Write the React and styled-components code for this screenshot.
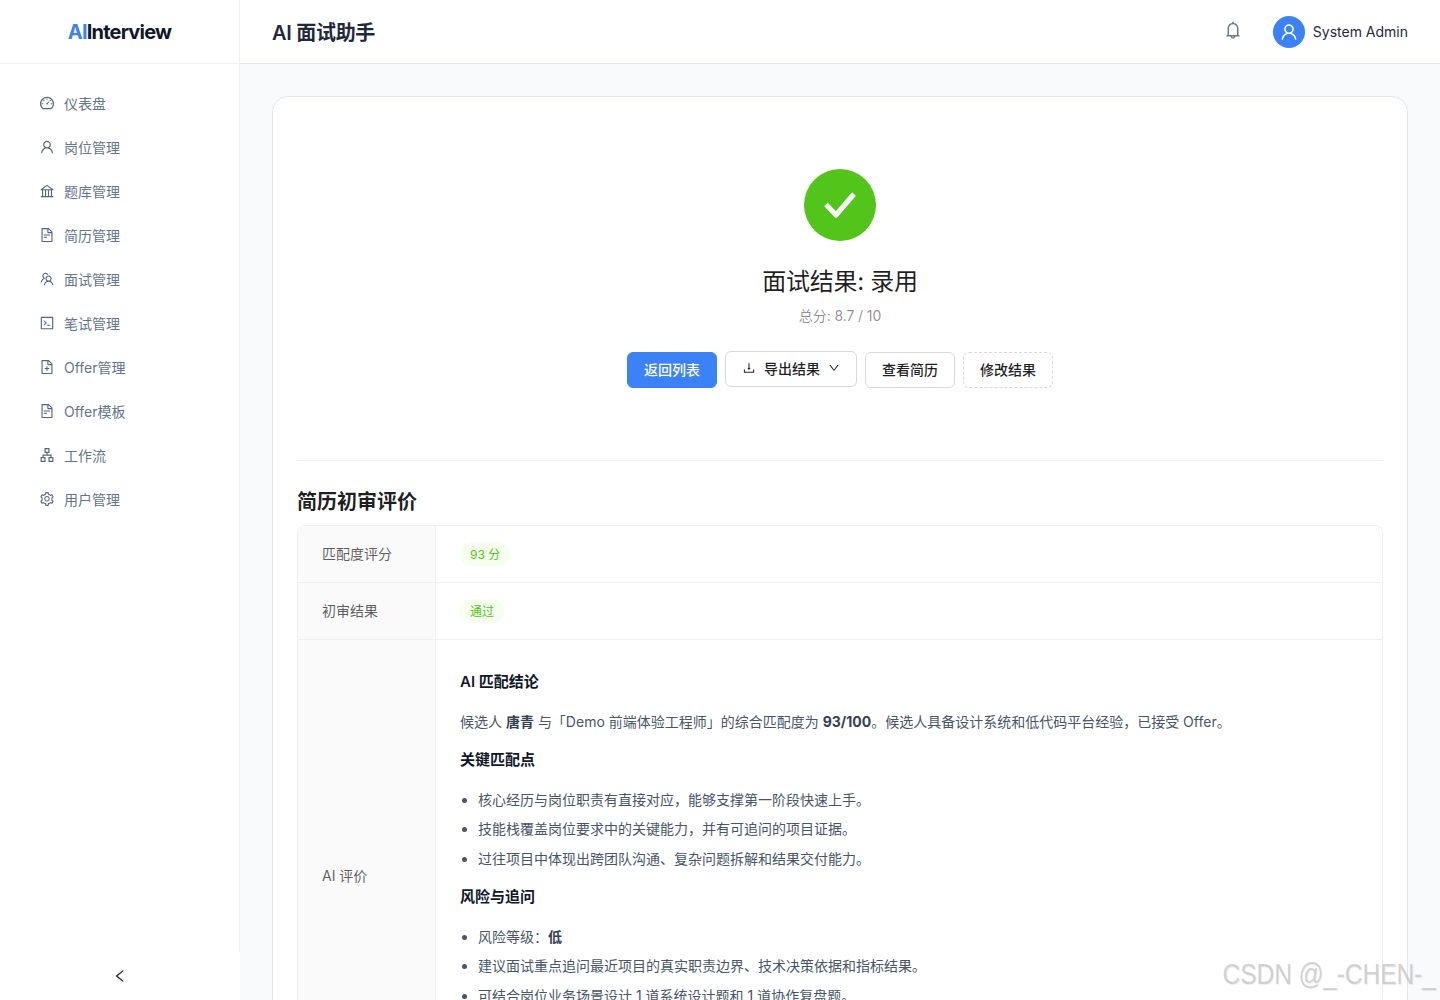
import React from 'react';
import styled, { createGlobalStyle } from 'styled-components';
import {
    AiOutlineDashboard, AiOutlineUser, AiOutlineBank, AiOutlineFileText, AiOutlineTeam,
    AiOutlineCode, AiOutlineFileAdd, AiOutlineApartment, AiOutlineSetting, AiOutlineBell,
    AiOutlineDownload, AiOutlineDown, AiOutlineLeft,
} from 'react-icons/ai';

const FONT = `Inter, "Noto Sans CJK SC", sans-serif`;

const GlobalStyle = createGlobalStyle`
    html, body { margin: 0; padding: 0; height: 100%; overflow: hidden; }
    body { font-family: ${FONT}; font-size: 14px; color: #0f172a; background: #f8fafc; }
    * { box-sizing: border-box; }
`;

const Layout = styled.div`
    display: flex;
    height: 1000px;
    overflow: hidden;
    position: relative;
`;

const Sider = styled.aside`
    width: 240px;
    flex: none;
    display: flex;
    flex-direction: column;
    background: #fff;
`;

const SiderBody = styled.div`
    flex: 1;
    border-right: 1px solid #f0f0f0;
`;

const Logo = styled.div`
    height: 64px;
    display: flex;
    align-items: center;
    justify-content: center;
    border-bottom: 1px solid #f0f0f0;
    font-size: 20px;
    font-weight: 700;
    letter-spacing: -0.8px;
    color: #0f172a;
    span { color: #3b82f6; }
`;

const Menu = styled.nav`
    padding: 15px 4px 0;
`;

const MenuItem = styled.div`
    height: 40px;
    margin: 4px;
    padding-left: 31px;
    display: flex;
    align-items: center;
    gap: 9px;
    color: #64748b;
    font-size: 14px;
    svg { font-size: 16px; color: #55657d; flex: none; }
`;

const Trigger = styled.div`
    height: 48px;
    display: flex;
    align-items: center;
    justify-content: center;
    color: #1f2937;
    font-size: 16px;
`;

const Main = styled.div`
    flex: 1;
    min-width: 0;
    display: flex;
    flex-direction: column;
`;

const Header = styled.header`
    height: 64px;
    flex: none;
    background: #fff;
    border-bottom: 1px solid #e2e8f0;
    padding: 0 32px;
    display: flex;
    align-items: center;
    justify-content: space-between;
`;

const PageTitle = styled.div`
    font-size: 20px;
    font-weight: 600;
    letter-spacing: -0.3px;
    color: #1e293b;
`;

const HeaderRight = styled.div`
    display: flex;
    align-items: center;
    gap: 30px;
`;

const Bell = styled.div`
    display: flex;
    font-size: 20px;
    color: #64748b;
    margin-top: -4px;
`;

const UserBox = styled.div`
    display: flex;
    align-items: center;
    gap: 8px;
    color: #1e293b;
`;

const Avatar = styled.div`
    width: 32px;
    height: 32px;
    border-radius: 50%;
    background: #3b82f6;
    color: #fff;
    display: flex;
    align-items: center;
    justify-content: center;
    font-size: 20px;
`;

const Content = styled.main`
    flex: 1;
    min-height: 0;
    overflow: hidden;
    padding: 32px;
`;

const Card = styled.section`
    background: #fff;
    border: 1px solid #e2e8f0;
    border-radius: 16px;
    padding: 24px;
`;

const Result = styled.div`
    padding: 48px 32px;
    text-align: center;
`;

const SuccessIcon = styled.div`
    width: 72px;
    height: 72px;
    margin: 0 auto 25px;
    border-radius: 50%;
    background: #52c41a;
    display: flex;
    align-items: center;
    justify-content: center;
`;

const ResultTitle = styled.div`
    font-size: 24px;
    line-height: 32px;
    letter-spacing: -0.3px;
    color: rgba(0, 0, 0, 0.88);
`;

const ResultSub = styled.div`
    margin-top: 7px;
    font-size: 14px;
    line-height: 22px;
    letter-spacing: -0.1px;
    color: rgba(0, 0, 0, 0.45);
`;

const Actions = styled.div`
    margin-top: 24px;
    display: flex;
    justify-content: center;
    align-items: center;
    gap: 8px;
`;

const Button = styled.div`
    height: 36px;
    padding: 0 16px 2px;
    margin-bottom: ${p => (p.$raised ? 2 : 0)}px;
    display: inline-flex;
    align-items: center;
    gap: 8px;
    border-radius: 6px;
    font-size: 14px;
    font-weight: 500;
    background: ${p => (p.$primary ? '#3b82f6' : '#fff')};
    color: ${p => (p.$primary ? '#fff' : 'rgba(0, 0, 0, 0.88)')};
    border: 1px ${p => (p.$dashed ? 'dashed' : 'solid')} ${p => (p.$primary ? '#3b82f6' : '#d9d9d9')};
`;

const ButtonIcon = styled.span`
    display: flex;
    font-size: ${p => p.$size}px;
`;

const Divider = styled.hr`
    margin: 23px 0 25px;
    border: 0;
    border-top: 1px solid #f0f0f0;
`;

const SectionTitle = styled.h3`
    margin: 0 0 7px;
    font-size: 20px;
    line-height: 32px;
    font-weight: 600;
    color: rgba(0, 0, 0, 0.88);
`;

const Table = styled.div`
    border: 1px solid #f0f0f0;
    border-radius: 8px 8px 0 0;
    overflow: hidden;
`;

const Row = styled.div`
    display: grid;
    grid-template-columns: 138px 1fr;
    min-height: ${p => p.$min}px;
    & + & { border-top: 1px solid #f0f0f0; }
`;

const Label = styled.div`
    background: #fafafa;
    border-right: 1px solid #f0f0f0;
    padding: 0 24px 2px;
    display: flex;
    align-items: center;
    color: rgba(0, 0, 0, 0.65);
`;

const Value = styled.div`
    padding: ${p => (p.$rich ? '31px 24px' : '0 24px')};
    display: ${p => (p.$rich ? 'block' : 'flex')};
    align-items: center;
    color: #475569;
`;

const Tag = styled.span`
    height: 24px;
    padding: 0 10px 2px;
    border-radius: 12px;
    background: #f6ffed;
    color: #52c41a;
    font-size: 12px;
    display: inline-flex;
    align-items: center;
`;

const RichHeading = styled.div`
    font-size: 15px;
    line-height: 22px;
    font-weight: 600;
    color: #0f172a;
    margin-bottom: 18px;
`;

const Para = styled.p`
    margin: 0 0 16px;
    line-height: 22px;
    color: #475569;
    strong { font-weight: 700; color: #334155; }
`;

const List = styled.ul`
    margin: 0 0 16px;
    padding-left: 18px;
    color: #475569;
    strong { font-weight: 600; color: #334155; }
`;

const ListItem = styled.li`
    line-height: 22px;
    margin-bottom: 7.4px;
`;

const Watermark = styled.div`
    position: absolute;
    right: 4px;
    bottom: 10px;
    font-family: "Liberation Sans", sans-serif;
    font-size: 29px;
    line-height: 32px;
    letter-spacing: -0.2px;
    color: rgba(195, 195, 195, 0.7);
    text-shadow: 1px 1px 1px rgba(0, 0, 0, 0.08);
    transform: scaleX(0.85);
    transform-origin: right center;
    pointer-events: none;
`;

const MENU = [
    [AiOutlineDashboard, '仪表盘'],
    [AiOutlineUser, '岗位管理'],
    [AiOutlineBank, '题库管理'],
    [AiOutlineFileText, '简历管理'],
    [AiOutlineTeam, '面试管理'],
    [AiOutlineCode, '笔试管理'],
    [AiOutlineFileAdd, 'Offer管理'],
    [AiOutlineFileText, 'Offer模板'],
    [AiOutlineApartment, '工作流'],
    [AiOutlineSetting, '用户管理'],
];

const App = () => (
    <Layout>
        <GlobalStyle />
        <Sider>
            <SiderBody>
                <Logo><span>AI</span>Interview</Logo>
                <Menu>
                    {MENU.map(([Icon, label]) => (
                        <MenuItem key={label}><Icon />{label}</MenuItem>
                    ))}
                </Menu>
            </SiderBody>
            <Trigger><AiOutlineLeft /></Trigger>
        </Sider>
        <Main>
            <Header>
                <PageTitle>AI 面试助手</PageTitle>
                <HeaderRight>
                    <Bell><AiOutlineBell /></Bell>
                    <UserBox>
                        <Avatar><AiOutlineUser /></Avatar>
                        System Admin
                    </UserBox>
                </HeaderRight>
            </Header>
            <Content>
                <Card>
                    <Result>
                        <SuccessIcon>
                            <svg width="34" height="28" viewBox="0 0 34 28" fill="none">
                                <path d="M3 13.5 L13 24 L31 3" stroke="#fff" strokeWidth="5" strokeLinejoin="round" />
                            </svg>
                        </SuccessIcon>
                        <ResultTitle>面试结果: 录用</ResultTitle>
                        <ResultSub>总分: 8.7 / 10</ResultSub>
                        <Actions>
                            <Button $primary>返回列表</Button>
                            <Button $raised>
                                <ButtonIcon $size={14}><AiOutlineDownload /></ButtonIcon>
                                导出结果
                                <ButtonIcon $size={12}><AiOutlineDown /></ButtonIcon>
                            </Button>
                            <Button>查看简历</Button>
                            <Button $dashed>修改结果</Button>
                        </Actions>
                    </Result>
                    <Divider />
                    <SectionTitle>简历初审评价</SectionTitle>
                    <Table>
                        <Row $min={56}>
                            <Label>匹配度评分</Label>
                            <Value><Tag>93 分</Tag></Value>
                        </Row>
                        <Row $min={57}>
                            <Label>初审结果</Label>
                            <Value><Tag>通过</Tag></Value>
                        </Row>
                        <Row $min={472}>
                            <Label>AI 评价</Label>
                            <Value $rich>
                                <RichHeading>AI 匹配结论</RichHeading>
                                <Para>候选人 <strong>唐青</strong> 与「Demo 前端体验工程师」的综合匹配度为 <strong>93/100</strong>。候选人具备设计系统和低代码平台经验，已接受 Offer。</Para>
                                <RichHeading>关键匹配点</RichHeading>
                                <List>
                                    <ListItem>核心经历与岗位职责有直接对应，能够支撑第一阶段快速上手。</ListItem>
                                    <ListItem>技能栈覆盖岗位要求中的关键能力，并有可追问的项目证据。</ListItem>
                                    <ListItem>过往项目中体现出跨团队沟通、复杂问题拆解和结果交付能力。</ListItem>
                                </List>
                                <RichHeading>风险与追问</RichHeading>
                                <List>
                                    <ListItem>风险等级：<strong>低</strong></ListItem>
                                    <ListItem>建议面试重点追问最近项目的真实职责边界、技术决策依据和指标结果。</ListItem>
                                    <ListItem>可结合岗位业务场景设计 1 道系统设计题和 1 道协作复盘题。</ListItem>
                                </List>
                            </Value>
                        </Row>
                    </Table>
                </Card>
            </Content>
        </Main>
        <Watermark>CSDN @_-CHEN-_</Watermark>
    </Layout>
);

export default App;
